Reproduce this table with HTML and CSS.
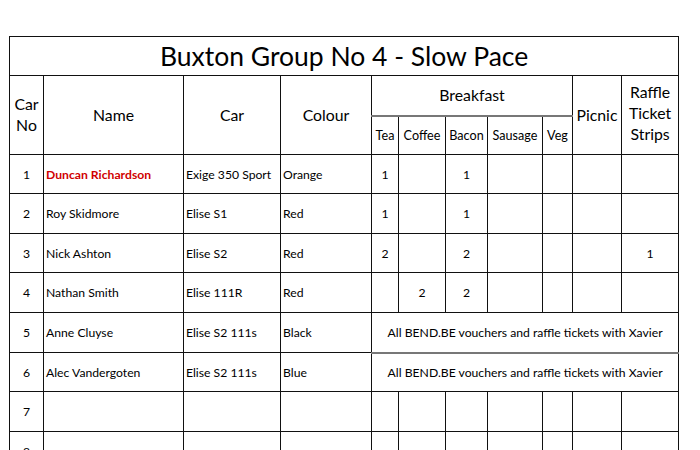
FILE: index.html
```html
<!DOCTYPE html>
<html>
<head>
<meta charset="utf-8">
<link rel="stylesheet" href="styles.css">
</head>
<body>
<div class="page">
<table class="sheet">
  <colgroup>
    <col class="c-no"><col class="c-name"><col class="c-car"><col class="c-colour">
    <col class="c-tea"><col class="c-coffee"><col class="c-bacon"><col class="c-sausage"><col class="c-veg">
    <col class="c-picnic"><col class="c-raffle">
  </colgroup>
  <tr class="r-title"><td colspan="11" class="title">Buxton Group No 4 - Slow Pace</td></tr>
  <tr class="r-head1">
    <th rowspan="2" class="hd">Car<br>No</th>
    <th rowspan="2" class="hd">Name</th>
    <th rowspan="2" class="hd">Car</th>
    <th rowspan="2" class="hd">Colour</th>
    <th colspan="5" class="hd bf">Breakfast</th>
    <th rowspan="2" class="hd">Picnic</th>
    <th rowspan="2" class="hd raffle">Raffle<br>Ticket<br>Strips</th>
  </tr>
  <tr class="r-head2">
    <th class="sub">Tea</th><th class="sub">Coffee</th><th class="sub">Bacon</th><th class="sub">Sausage</th><th class="sub">Veg</th>
  </tr>
  <tr class="row a"><td class="num">1</td><td class="txt red">Duncan Richardson</td><td class="txt">Exige 350 Sport</td><td class="txt">Orange</td><td class="num">1</td><td class="num"></td><td class="num">1</td><td></td><td></td><td></td><td></td></tr>
  <tr class="row b"><td class="num">2</td><td class="txt">Roy Skidmore</td><td class="txt">Elise S1</td><td class="txt">Red</td><td class="num">1</td><td class="num"></td><td class="num">1</td><td></td><td></td><td></td><td></td></tr>
  <tr class="row a"><td class="num">3</td><td class="txt">Nick Ashton</td><td class="txt">Elise S2</td><td class="txt">Red</td><td class="num">2</td><td class="num"></td><td class="num">2</td><td></td><td></td><td></td><td class="num">1</td></tr>
  <tr class="row b"><td class="num">4</td><td class="txt">Nathan Smith</td><td class="txt">Elise 111R</td><td class="txt">Red</td><td class="num"></td><td class="num">2</td><td class="num">2</td><td></td><td></td><td></td><td></td></tr>
  <tr class="row b"><td class="num">5</td><td class="txt">Anne Cluyse</td><td class="txt">Elise S2 111s</td><td class="txt">Black</td><td colspan="7" class="note note-top">All BEND.BE vouchers and raffle tickets with Xavier</td></tr>
  <tr class="row a"><td class="num">6</td><td class="txt">Alec Vandergoten</td><td class="txt">Elise S2 111s</td><td class="txt">Blue</td><td colspan="7" class="note">All BEND.BE vouchers and raffle tickets with Xavier</td></tr>
  <tr class="row b"><td class="num">7</td><td></td><td></td><td></td><td></td><td></td><td></td><td></td><td></td><td></td><td></td></tr>
  <tr class="row a"><td class="num">8</td><td></td><td></td><td></td><td></td><td></td><td></td><td></td><td></td><td></td><td></td></tr>
</table>
</div>
</body>
</html>
```

FILE: styles.css
```css
html, body {
  margin: 0;
  padding: 0;
  background: #fff;
  overflow: hidden;
}
.page {
  padding: 36px 0 0 9px;
  font-family: Lato, "Open Sans", sans-serif;
  color: #000;
}
.sheet {
  border-collapse: collapse;
  table-layout: fixed;
  width: 669px;
}
.sheet td, .sheet th {
  border: 1.5px solid #111;
  padding: 0;
  overflow: hidden;
  white-space: nowrap;
}
.c-no { width: 34px; }
.c-name { width: 140px; }
.c-car { width: 97px; }
.c-colour { width: 91px; }
.c-tea { width: 27px; }
.c-coffee { width: 47px; }
.c-bacon { width: 42px; }
.c-sausage { width: 55px; }
.c-veg { width: 30px; }
.c-picnic { width: 49px; }
.c-raffle { width: 57px; }

.r-title { height: 39px; }
.title {
  text-align: center;
  font-size: 26.5px;
  font-weight: 400;
  line-height: 1;
  padding-top: 1px !important;
}
.r-head1 { height: 40px; }
.r-head2 { height: 39px; }
.hd {
  font-weight: 400;
  font-size: 15.8px;
  line-height: 21px;
  text-align: center;
  padding-bottom: 2px !important;
}
.raffle { padding-bottom: 5px !important; }
.bf { border-bottom: 2px solid #777 !important; }
.sub {
  font-weight: 400;
  font-size: 12.6px;
  text-align: center;
}
.row.a { height: 39px; }
.row.b { height: 40px; }
.row td { font-size: 12.2px; }
.num { text-align: center; }
.txt { text-align: left; padding-left: 2px !important; }
.red { color: #d00000; font-weight: 700; }
.note { text-align: center; font-size: 12.3px; }
.note-top { border-bottom: 2px solid #777 !important; }
```
